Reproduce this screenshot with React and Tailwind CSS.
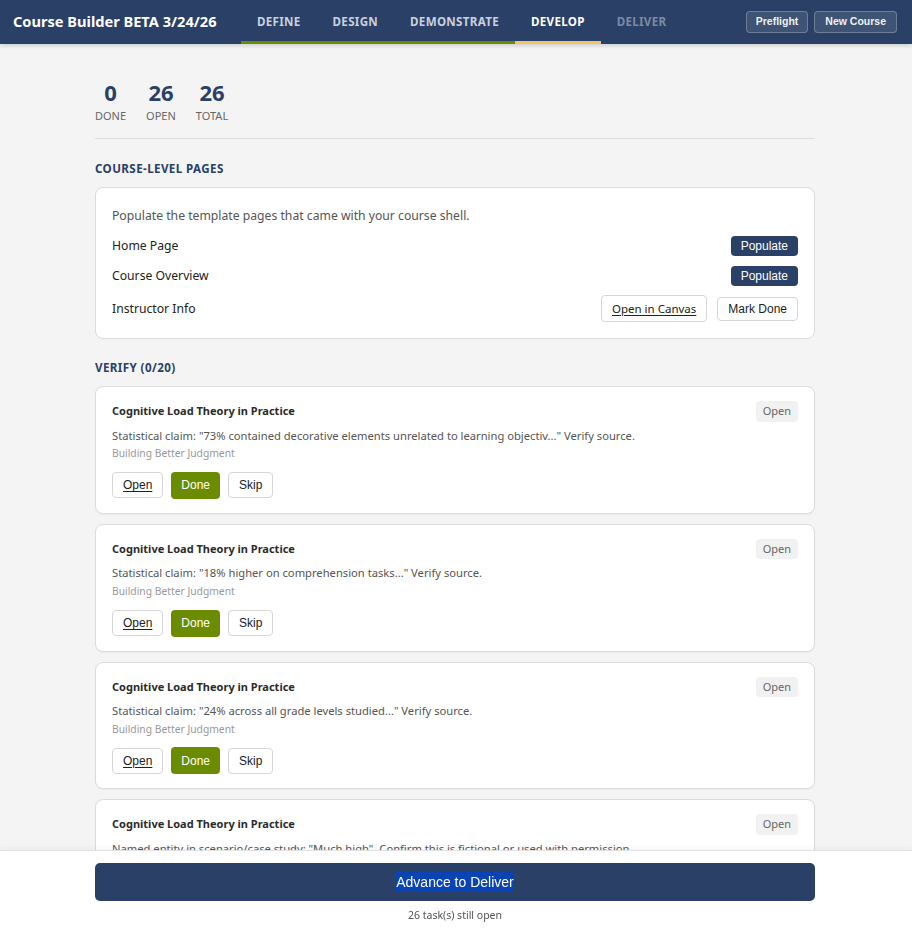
import React from 'react';

const FONT = { fontFamily: '"Noto Sans", "Open Sans", sans-serif' };
const ARIAL = { fontFamily: '"Liberation Sans", Arial, sans-serif' };

const tabs = [
  { label: 'Define', state: 'done' },
  { label: 'Design', state: 'done' },
  { label: 'Demonstrate', state: 'done' },
  { label: 'Develop', state: 'active' },
  { label: 'Deliver', state: 'locked' },
];

const tasks = [
  { title: 'Cognitive Load Theory in Practice', text: 'Statistical claim: "73% contained decorative elements unrelated to learning objectiv..." Verify source.', source: 'Building Better Judgment' },
  { title: 'Cognitive Load Theory in Practice', text: 'Statistical claim: "18% higher on comprehension tasks..." Verify source.', source: 'Building Better Judgment' },
  { title: 'Cognitive Load Theory in Practice', text: 'Statistical claim: "24% across all grade levels studied..." Verify source.', source: 'Building Better Judgment' },
  { title: 'Cognitive Load Theory in Practice', text: 'Named entity in scenario/case study: "Much high". Confirm this is fictional or used with permission.', source: 'Building Better Judgment' },
];

function Header() {
  return (
    <header className="h-[44px] bg-[#2a4066] flex items-stretch pl-[13px] pr-[15px] shadow-[0_2px_4px_rgba(0,0,0,0.15)] relative z-10">
      <div className="flex items-center text-white font-bold text-[14.6px] w-[228px]">Course Builder BETA 3/24/26</div>
      <nav className="flex items-stretch">
        {tabs.map(t => (
          <div
            key={t.label}
            className={`px-[16px] flex items-center uppercase font-bold text-[11.6px] tracking-[0.3px] border-b-[3px] pt-[2px] ${
              t.state === 'done'
                ? 'border-[#6b8c00] text-[#c9d1de]'
                : t.state === 'active'
                ? 'border-[#f5c462] text-white'
                : 'border-transparent text-[#7d8aa3]'
            }`}
          >
            {t.label}
          </div>
        ))}
      </nav>
      <div className="ml-auto flex items-center gap-[6px]" style={ARIAL}>
        <button className="h-[22px] px-[9px] rounded-[4px] border border-white/25 bg-white/10 text-[#eef1f6] text-[10.5px] font-bold">Preflight</button>
        <button className="h-[22px] px-[10px] rounded-[4px] border border-white/25 bg-white/10 text-[#eef1f6] text-[10.5px] font-bold">New Course</button>
      </div>
    </header>
  );
}

function Stat({ value, label }) {
  return (
    <div className="flex flex-col items-center">
      <span className="text-[22px] font-bold text-[#2a4066] leading-[26px]">{value}</span>
      <span className="text-[11px] uppercase text-[#666] leading-[14px] mt-[4px]">{label}</span>
    </div>
  );
}

function SmallBtn({ children, variant = 'outline', underline }) {
  const base = 'rounded-[4px] text-[12px] leading-none px-[10px]';
  const styles = {
    navy: 'bg-[#2a4066] text-white h-[20px] px-[9px]',
    outline: 'bg-white border border-[#d6d6d6] text-[#222] h-[26px]',
    green: 'bg-[#6b8c00] text-white h-[27px]',
  };
  return (
    <button
      className={`${base} ${styles[variant]} ${underline ? 'underline underline-offset-2' : ''}`}
      style={ARIAL}
    >
      {children}
    </button>
  );
}

function TaskCard({ task }) {
  return (
    <div className="bg-white border border-[#dcdcdc] rounded-[8px] px-[16px] pt-[14px] pb-[14px] shadow-[0_1px_2px_rgba(0,0,0,0.04)]">
      <div className="flex items-start justify-between">
        <h4 className="text-[11px] font-bold text-[#2b2b2b] mt-[2px]">{task.title}</h4>
        <span className="bg-[#f1f1f1] text-[#666] text-[11px] rounded-[4px] px-[7px] py-[2px]">Open</span>
      </div>
      <p className="text-[11.2px] text-[#555] mt-[6px] whitespace-nowrap overflow-hidden">{task.text}</p>
      <p className="text-[10.3px] text-[#999] mt-[2px]">{task.source}</p>
      <div className="flex items-center gap-[8px] mt-[10px]">
        <SmallBtn underline>Open</SmallBtn>
        <SmallBtn variant="green">Done</SmallBtn>
        <SmallBtn>Skip</SmallBtn>
      </div>
    </div>
  );
}

export default function App() {
  return (
    <div className="min-h-screen bg-[#f4f4f4] text-[#222]" style={FONT}>
      <Header />

      <div className="pr-[2px]">
        <main className="max-w-[720px] mx-auto pt-[35px] pb-[120px]">
          <div className="flex gap-[20px] pb-[15px] border-b border-[#dedede]">
            <Stat value="0" label="Done" />
            <Stat value="26" label="Open" />
            <Stat value="26" label="Total" />
          </div>

          <h3 className="mt-[21px] mb-[10px] text-[11.6px] font-bold uppercase tracking-[0.4px] text-[#2a4066]">Course-Level Pages</h3>
          <div className="bg-white border border-[#dcdcdc] rounded-[8px] px-[16px] pt-[19px] pb-[11px] text-[12.2px]">
            <p className="text-[#555] mb-[5px]">Populate the template pages that came with your course shell.</p>
            <div className="flex items-center justify-between h-[30px]">
              <span>Home Page</span>
              <SmallBtn variant="navy">Populate</SmallBtn>
            </div>
            <div className="flex items-center justify-between h-[30px]">
              <span>Course Overview</span>
              <SmallBtn variant="navy">Populate</SmallBtn>
            </div>
            <div className="flex items-center justify-between h-[36px]">
              <span>Instructor Info</span>
              <div className="flex items-center gap-[10px]">
                <button className="h-[27px] px-[10px] bg-white border border-[#d6d6d6] rounded-[4px] text-[11.5px] underline underline-offset-2">Open in Canvas</button>
                <button className="h-[24px] px-[10px] bg-white border border-[#d6d6d6] rounded-[4px] text-[12px] text-[#222]" style={ARIAL}>Mark Done</button>
              </div>
            </div>
          </div>

          <h3 className="mt-[20px] mb-[10px] text-[11.6px] font-bold uppercase tracking-[0.4px] text-[#2a4066]">Verify (0/20)</h3>
          <div className="flex flex-col gap-[10px]">
            {tasks.map((t, i) => (
              <TaskCard key={i} task={t} />
            ))}
          </div>
        </main>
      </div>

      <footer className="fixed bottom-0 left-0 right-0 h-[81px] bg-white border-t border-[#e2e2e2] shadow-[0_-2px_6px_rgba(0,0,0,0.04)] pr-[2px]">
        <div className="max-w-[720px] mx-auto pt-[12px]">
          <button className="w-full h-[38px] bg-[#2a4066] rounded-[5px] text-white text-[14px]" style={ARIAL}>
            <span className="bg-[#0a43b3] py-[2px]">Advance to Deliver</span>
          </button>
          <p className="text-center text-[10.5px] text-[#555] mt-[7px]">26 task(s) still open</p>
        </div>
      </footer>
    </div>
  );
}
